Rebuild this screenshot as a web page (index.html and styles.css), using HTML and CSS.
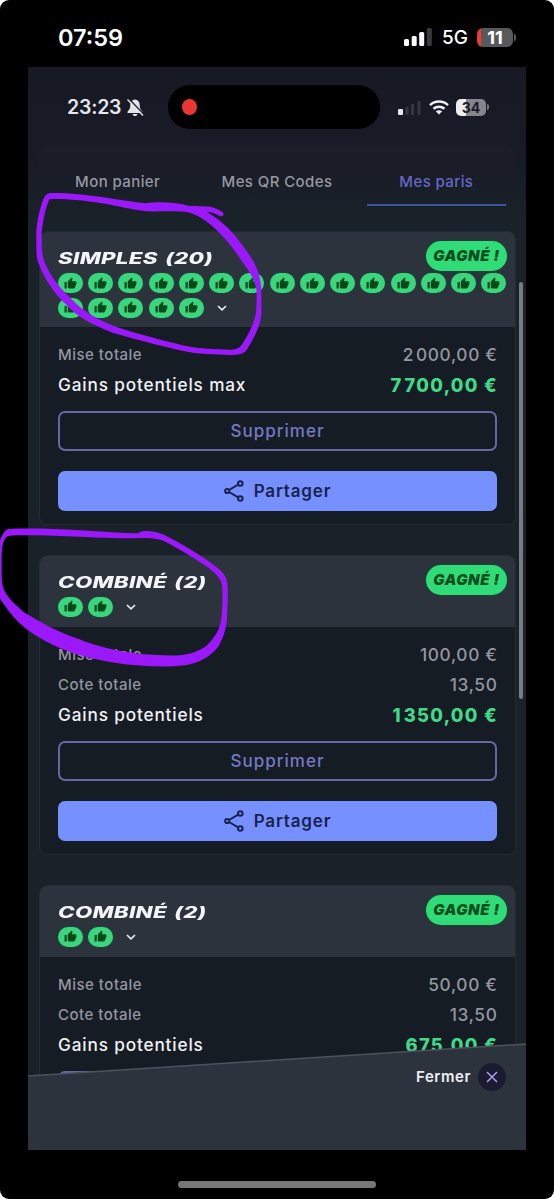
FILE: index.html
```html
<!DOCTYPE html>
<html lang="fr">
<head>
<meta charset="utf-8">
<title>Mes paris</title>
<link rel="stylesheet" href="styles.css">
</head>
<body>
<svg width="0" height="0" class="defs">
  <symbol id="thumb" viewBox="0 0 24 24"><path d="M1 21h4V9H1v12zm22-11c0-1.100-.9-2-2-2h-6.310l.95-4.570.03-.32c0-.41-.17-.79-.44-1.060L14.170 1 7.590 7.590C7.220 7.950 7 8.450 7 9v10c0 1.100.9 2 2 2h9c.83 0 1.540-.5 1.840-1.220l3.020-7.050c.09-.23.14-.47.14-.73v-2z"/></symbol>
  <symbol id="chev" viewBox="0 0 10 6"><path d="M1 1l4 3.800L9 1" fill="none" stroke="#e8eaf0" stroke-width="1.700"/></symbol>
  <symbol id="share" viewBox="0 0 20 22"><g fill="none" stroke="#17234d" stroke-width="2"><circle cx="3.200" cy="11" r="2.100"/><circle cx="16.300" cy="3.500" r="2.300"/><circle cx="16.300" cy="18.500" r="2.300"/><path d="M5 10l9.200-5.300M5 12l9.200 5.300"/></g></symbol>
</svg>
<div class="phone">
  <header class="status">
    <span class="clock">07:59</span>
    <div class="status-right">
      <svg width="28" height="18" viewBox="0 0 28 18"><g fill="#fff"><rect x="0" y="11" width="5" height="7" rx="1.500"/><rect x="7.700" y="8" width="5" height="10" rx="1.500"/><rect x="15.200" y="4" width="5" height="14" rx="1.500"/><rect x="22.800" y="0" width="5" height="18" rx="1.500" fill="#3b3b3d"/></g></svg>
      <span class="net">5G</span>
      <span class="battery"><b>11</b></span>
      <i class="nub"></i>
    </div>
  </header>

  <main class="screen">
    <div class="inner-status">
      <span class="inner-clock">23:23</span>
      <svg class="bell" width="18" height="19" viewBox="0 0 18 19"><path d="M9 1.500c-3.400.4-4.700 3-4.700 5.600 0 3.500-1.100 4.700-2.800 6.600V15h15v-1.300c-1.700-1.900-2.800-3.100-2.800-6.600C13.700 4.500 12.400 1.900 9 1.500zM6.500 16h5c-.3 1.500-1.300 2-2.500 2s-2.200-.5-2.500-2z" fill="#e3e3ea"/><path d="M2.500 .5L18 16.500" stroke="#171924" stroke-width="1.500"/><path d="M1.500 1.500L17 17.500" stroke="#e3e3ea" stroke-width="1.400"/></svg>
      <span class="island"><i></i></span>
      <svg class="sig" width="24" height="15" viewBox="0 0 24 15"><rect y="9" width="5" height="6" rx="1" fill="#e6e6ec"/><g fill="#343640"><rect x="7.500" y="7" width="3" height="8" rx="1"/><rect x="13" y="4" width="3" height="11" rx="1"/><rect x="19.500" y="1" width="3" height="14" rx="1"/></g></svg>
      <svg class="wifi" width="20" height="15" viewBox="0 0 20 15"><g fill="none" stroke="#eeeef3" stroke-width="2.500"><path d="M1 5.200c5-4.900 13-4.900 18 0"/><path d="M4.500 8.800c3.200-2.900 7.800-2.900 11 0"/></g><path d="M10 14.600l-3.200-3.300c1.800-1.500 4.600-1.500 6.400 0z" fill="#eeeef3"/></svg>
      <span class="inner-battery">34</span><i class="inner-nub"></i>
    </div>

    <nav class="tabs">
      <a class="tab"><span>Mon panier</span></a>
      <a class="tab"><span>Mes QR Codes</span></a>
      <a class="tab active"><span>Mes paris</span></a>
    </nav>

    <div class="list">
      <section class="card">
        <div class="head">
          <h2>SIMPLES (20)</h2><em class="won">GAGNÉ !</em>
          <div class="pills">
            <i><svg><use href="#thumb"/></svg></i><i><svg><use href="#thumb"/></svg></i><i><svg><use href="#thumb"/></svg></i><i><svg><use href="#thumb"/></svg></i><i><svg><use href="#thumb"/></svg></i><i><svg><use href="#thumb"/></svg></i><i><svg><use href="#thumb"/></svg></i><i><svg><use href="#thumb"/></svg></i><i><svg><use href="#thumb"/></svg></i><i><svg><use href="#thumb"/></svg></i><i><svg><use href="#thumb"/></svg></i><i><svg><use href="#thumb"/></svg></i><i><svg><use href="#thumb"/></svg></i><i><svg><use href="#thumb"/></svg></i><i><svg><use href="#thumb"/></svg></i><i><svg><use href="#thumb"/></svg></i><i><svg><use href="#thumb"/></svg></i><i><svg><use href="#thumb"/></svg></i><i><svg><use href="#thumb"/></svg></i><i><svg><use href="#thumb"/></svg></i><svg class="chev"><use href="#chev"/></svg>
          </div>
        </div>
        <div class="body">
          <div class="row"><span>Mise totale</span><span class="num">2<s></s>000,00 €</span></div>
          <div class="row gain"><span>Gains potentiels max</span><span class="num">7<s></s>700,00 €</span></div>
          <button class="btn outline">Supprimer</button>
          <button class="btn fill"><svg><use href="#share"/></svg>Partager</button>
        </div>
      </section>

      <section class="card">
        <div class="head">
          <h2>COMBINÉ (2)</h2><em class="won">GAGNÉ !</em>
          <div class="pills"><i><svg><use href="#thumb"/></svg></i><i><svg><use href="#thumb"/></svg></i><svg class="chev"><use href="#chev"/></svg></div>
        </div>
        <div class="body">
          <div class="row"><span>Mise totale</span><span class="num">100,00 €</span></div>
          <div class="row"><span>Cote totale</span><span class="num">13,50</span></div>
          <div class="row gain"><span>Gains potentiels</span><span class="num">1<s></s>350,00 €</span></div>
          <button class="btn outline">Supprimer</button>
          <button class="btn fill"><svg><use href="#share"/></svg>Partager</button>
        </div>
      </section>

      <section class="card">
        <div class="head">
          <h2>COMBINÉ (2)</h2><em class="won">GAGNÉ !</em>
          <div class="pills"><i><svg><use href="#thumb"/></svg></i><i><svg><use href="#thumb"/></svg></i><svg class="chev"><use href="#chev"/></svg></div>
        </div>
        <div class="body">
          <div class="row"><span>Mise totale</span><span class="num">50,00 €</span></div>
          <div class="row"><span>Cote totale</span><span class="num">13,50</span></div>
          <div class="row gain"><span>Gains potentiels</span><span class="num">675,00 €</span></div>
          <div class="btn outline"></div>
        </div>
      </section>
    </div>

    <i class="scrollbar"></i>
    <footer class="sheet">
      <svg class="sheet-bg" width="498" height="107" viewBox="0 0 498 107"><path d="M0 33L498 1V107H0z" fill="#2d333d"/><path d="M0 33L498 1" stroke="#4d525d" stroke-width="1.500"/></svg>
      <span class="close-label">Fermer</span>
      <span class="close"><svg width="12" height="12" viewBox="0 0 12 12"><path d="M1 1l10 10M11 1L1 11" stroke="#a49be6" stroke-width="1.600"/></svg></span>
    </footer>
  </main>
  <i class="home"></i>

  <svg class="marker" width="554" height="1199" viewBox="0 0 554 1199">
    <g fill="#9b18fb" fill-rule="evenodd">
      <path transform="translate(30 185) scale(.33333)" d="M62 24C110 22 180 30 240 40C290 48 320 52 345 55C380 50 430 50 475 62C510 64 530 63 545 66C560 70 572 76 580 84C583 92 574 97 568 92C555 86 545 81 530 80C570 105 600 130 625 165C655 205 680 235 688 275C696 300 694 340 694 390C690 430 665 470 650 495C640 508 625 510 600 510C560 508 500 508 460 498C380 480 300 458 250 444C190 420 140 395 110 360C75 330 40 275 28 240C18 225 19 200 19 140C22 100 32 60 42 38C48 28 55 24 62 24ZM62 42C115 40 180 48 235 58C280 68 320 76 350 79C390 80 440 76 475 82C505 90 540 115 565 140C600 175 620 205 640 235C660 262 678 290 680 320C680 350 680 370 677 390C670 420 655 450 635 480C625 492 615 494 600 494C560 492 510 492 465 482C390 464 320 446 260 426C220 412 175 388 150 366C110 330 70 290 50 245C36 220 35 200 35 145C38 110 45 75 56 48C58 43 60 42 62 42Z"/>
      <path transform="translate(0 520) scale(.33333)" d="M25 27C80 24 160 26 240 31C310 35 370 40 415 40C422 34 430 32 440 33C470 34 490 42 510 54C560 80 610 110 650 142C672 158 682 175 683 200C684 240 682 270 681 295C680 320 670 355 655 380C630 410 600 426 565 434C530 440 480 440 440 438C360 434 280 420 210 396C140 370 80 335 40 290C20 265 5 245 0 235L-5 220V80C-2 60 12 30 25 27ZM28 47C80 44 160 46 240 50C320 54 380 56 420 54C450 54 475 56 490 62C540 88 600 122 640 155C658 172 667 185 667 205C668 240 667 270 664 295C660 330 645 350 625 372C600 395 570 402 540 406C500 408 460 404 425 402C360 396 290 380 230 355C170 335 110 300 70 275C40 250 20 230 10 205C4 185 5 160 5 130C5 100 6 75 12 62C16 52 22 48 28 47Z"/>
    </g>
  </svg>
</div>
</body>
</html>
```
FILE: styles.css
```css
* { box-sizing: border-box; }
body { margin: 0; background: #fff; font-family: Inter, "Noto Sans", sans-serif; }
.defs { position: absolute; }
i { font-style: normal; }
.phone { position: relative; width: 554px; height: 1199px; background: #000; border-radius: 9px; overflow: hidden; display: flex; flex-direction: column; align-items: center; }
.status { width: 100%; height: 67px; flex: none; display: flex; justify-content: space-between; align-items: flex-start; padding: 22px 38px 0 58px; color: #fff; }
.clock { font-size: 23.500px; line-height: 31px; font-weight: 600; }
.status-right { display: flex; align-items: center; height: 30px; }
.net { font-size: 19px; margin-left: 10px; width: 26px; margin-right: 9px; font-weight: 500; }
.battery { width: 36px; height: 19px; border-radius: 6px; background: linear-gradient(90deg, #f03a32 4px, #59595b 4px); display: grid; place-items: center; font-size: 18px; line-height: 19px; }
.nub { width: 2px; height: 7px; margin-left: 1px; border-radius: 0 2px 2px 0; background: #59595b; }

.screen { position: relative; width: 498px; height: 1083px; flex: none; overflow: hidden; background: linear-gradient(#171924 0, #181b25 90px, #192129 150px, #1a2129 100%); }
.inner-status { height: 62px; padding: 18px 37px 0 39px; display: flex; align-items: center; color: #e6e6ec; }
.inner-clock { font-size: 19.500px; font-weight: 600; width: 59px; letter-spacing: -.2px; flex: none; }
.bell { margin-right: 24px; flex: none; }
.island { width: 212px; height: 44px; border-radius: 22px; background: #000; flex: none; display: flex; align-items: center; padding-left: 14px; }
.island i { width: 15px; height: 16px; border-radius: 50%; background: #ea372f; filter: blur(.7px); }
.sig { margin-left: 18px; flex: none; }
.wifi { margin-left: 7px; flex: none; }
.inner-battery { width: 30px; height: 17px; margin-left: 7px; flex: none; border-radius: 5px; background: linear-gradient(90deg, #eeeef2 10px, #85858c 10px); color: #1c1c26; font-size: 14px; line-height: 17px; font-weight: 700; text-align: center; }
.inner-nub { width: 2px; height: 6px; margin-left: 1px; flex: none; background: #73747c; border-radius: 0 2px 2px 0; }
.island { margin-left: 0; }

.tabs { margin: 16px 10px 0; height: 61px; border-radius: 14px 14px 0 0; display: grid; grid-template-columns: repeat(3, 1fr); background: linear-gradient(#1c1e28 0, #1a1d27 14px, rgba(25,32,40,0) 40px); }
.tab { display: flex; justify-content: center; padding-top: 25px; margin: 0 10px; font-size: 15px; line-height: 24px; font-weight: 500; letter-spacing: .4px; color: #9698a1; white-space: nowrap; border-bottom: 2px solid transparent; }
.tab.active { color: #6568c9; border-color: #3d5699; }

.list { padding: 25px 10px 0; display: flex; flex-direction: column; gap: 30px; }
.card { border: 1px solid #232b33; border-radius: 8px; background: #161c24; margin: 0 0 0 1px; overflow: hidden; }
.head { position: relative; margin: -1px -1px 0; padding: 16px 9px 10px 19px; background: #2d333d; display: grid; grid-template-columns: 1fr auto; }
.card:first-child .head { padding-bottom: 9px; }
h2 { margin: 1px 0 -1px; font-size: 15.500px; line-height: 22px; font-weight: 800; font-style: italic; color: #f4f5f8; transform: scaleX(1.440); transform-origin: 0 50%; white-space: nowrap; justify-self: start; letter-spacing: .2px; word-spacing: 1.500px; }
.won { width: 81px; height: 30px; margin: -6px 0 -2px; border-radius: 15px; background: #2fdc78; color: #07501d; font-size: 15px; line-height: 30px; font-weight: 900; text-align: center; letter-spacing: .5px; box-shadow: 0 0 3px #07592c; }
.pills { grid-column: 1 / 3; margin-top: 4px; display: flex; flex-wrap: wrap; gap: 4.500px 5.240px; align-items: center; }
.pills i { width: 25px; height: 20px; border-radius: 10px; background: #3bd57d; display: grid; place-items: center; box-shadow: 0 0 2px #08602f; }
.pills i svg { width: 13px; height: 13px; fill: #07491a; display: block; }
.chev { width: 10px; height: 6px; margin-left: 8px; }

.body { padding: 13px 18px 13px; }
.row { height: 30px; display: flex; justify-content: space-between; align-items: center; color: #9496a0; font-size: 15px; font-weight: 500; letter-spacing: .5px; }
.row .num { font-size: 17.300px; letter-spacing: .65px; margin-right: -.5px; }
.row s { display: inline-block; width: 2px; }
.row.gain { color: #f0f1f5; font-size: 17.200px; letter-spacing: .85px; }
.row.gain .num { color: #3fd98a; font-weight: 800; font-size: 18.300px; letter-spacing: 1.300px; margin-right: -1px; }
.btn { width: 100%; height: 40px; border-radius: 7px; display: flex; align-items: center; justify-content: center; font: 500 17px Inter, sans-serif; letter-spacing: 1px; padding: 0; }
.outline { margin-top: 11px; background: transparent; border: 2px solid #6668a0; color: #7479c4; }
.fill { margin-top: 20px; border: 0; background: #7790ff; color: #17234d; font-weight: 600; letter-spacing: .85px; }
.fill svg { width: 20px; height: 22px; margin-right: 10px; }

.scrollbar { position: absolute; left: 491px; top: 215px; width: 4px; height: 417px; border-radius: 2px; background: #777c84; }
.sheet { position: absolute; left: 0; right: 0; bottom: 0; height: 107px; display: flex; align-items: flex-start; justify-content: flex-end; padding: 20px 20px 0 0; }
.sheet-bg { position: absolute; inset: 0; }
.close-label { position: relative; font-size: 15px; line-height: 28px; font-weight: 600; color: #eceef3; margin-right: 7px; letter-spacing: .55px; }
.close { position: relative; width: 28px; height: 28px; border-radius: 50%; background: #1a1b30; display: grid; place-items: center; }
.home { width: 198px; height: 7px; margin-top: 31px; border-radius: 4px; background: #777; flex: none; }
.marker { position: absolute; left: 0; top: 0; pointer-events: none; }
```
